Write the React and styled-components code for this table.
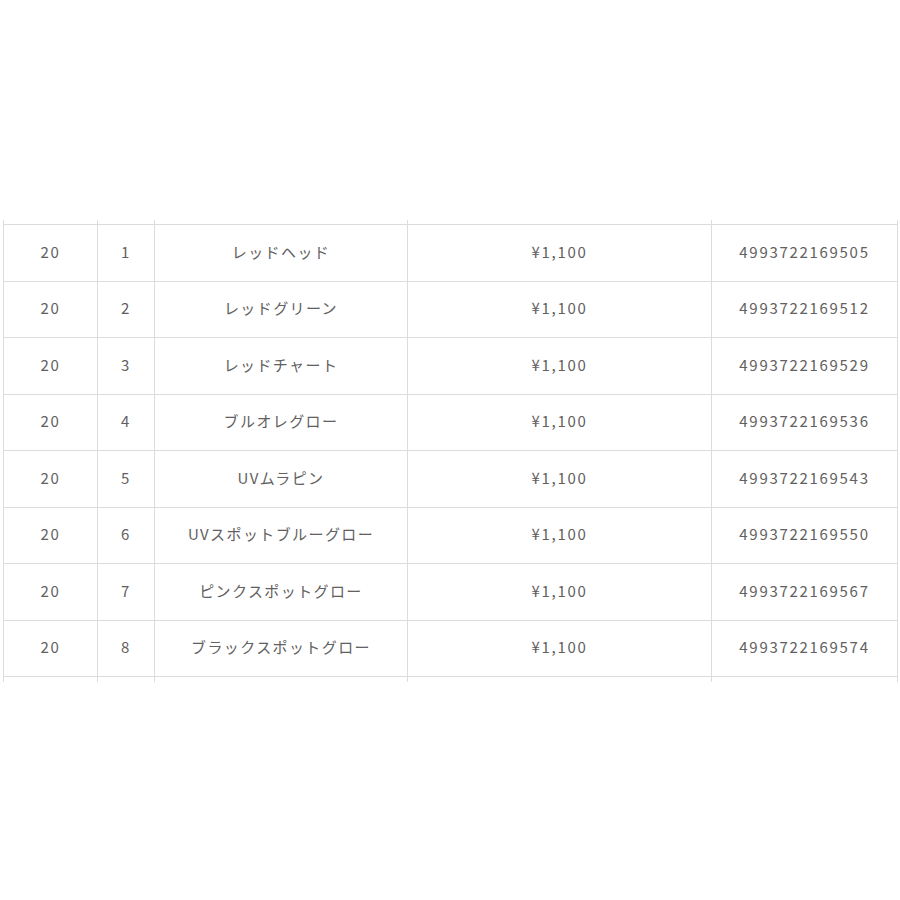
import React from 'react';
import styled, { createGlobalStyle } from 'styled-components';

const GlobalStyle = createGlobalStyle`
  html, body {
    margin: 0;
    padding: 0;
    background: #fff;
  }
`;

const Page = styled.div`
  width: 900px;
  height: 900px;
  padding: 220px 3px 0 3px;
  box-sizing: border-box;
`;

const Table = styled.table`
  width: 894px;
  border-collapse: collapse;
  table-layout: fixed;
  font-family: "Noto Sans CJK JP", "Noto Sans", sans-serif;
  font-size: 15px;
  font-weight: 400;
  color: #626060;
`;

const Cell = styled.td`
  border: 1px solid #dcdcdc;
  height: ${p => (p.$stub ? p.$stub : 52.5)}px;
  padding: 0 0 ${p => (p.$stub ? 0 : 3)}px;
  line-height: 1;
  letter-spacing: ${p => (p.$num ? 1.7 : 1.4)}px;
  text-align: center;
  vertical-align: middle;
  ${p => p.$stub && `
    border-top: none;
    border-bottom: none;
  `}
`;

const widths = [94, 57, 253, 304, 186];

const rows = [
  ['1', 'レッドヘッド', '4993722169505'],
  ['2', 'レッドグリーン', '4993722169512'],
  ['3', 'レッドチャート', '4993722169529'],
  ['4', 'ブルオレグロー', '4993722169536'],
  ['5', 'UVムラピン', '4993722169543'],
  ['6', 'UVスポットブルーグロー', '4993722169550'],
  ['7', 'ピンクスポットグロー', '4993722169567'],
  ['8', 'ブラックスポットグロー', '4993722169574'],
];

function StubRow({ h }) {
  return (
    <tr>
      {widths.map((w, i) => (
        <Cell key={i} $stub={h} />
      ))}
    </tr>
  );
}

export default function App() {
  return (
    <>
      <GlobalStyle />
      <Page>
        <Table>
          <colgroup>
            {widths.map((w, i) => (
              <col key={i} style={{ width: w }} />
            ))}
          </colgroup>
          <tbody>
            <StubRow h={4} />
            {rows.map(([no, name, jan]) => (
              <tr key={no}>
                <Cell $num>20</Cell>
                <Cell $num>{no}</Cell>
                <Cell>{name}</Cell>
                <Cell $num>¥1,100</Cell>
                <Cell $num>{jan}</Cell>
              </tr>
            ))}
            <StubRow h={5} />
          </tbody>
        </Table>
      </Page>
    </>
  );
}
